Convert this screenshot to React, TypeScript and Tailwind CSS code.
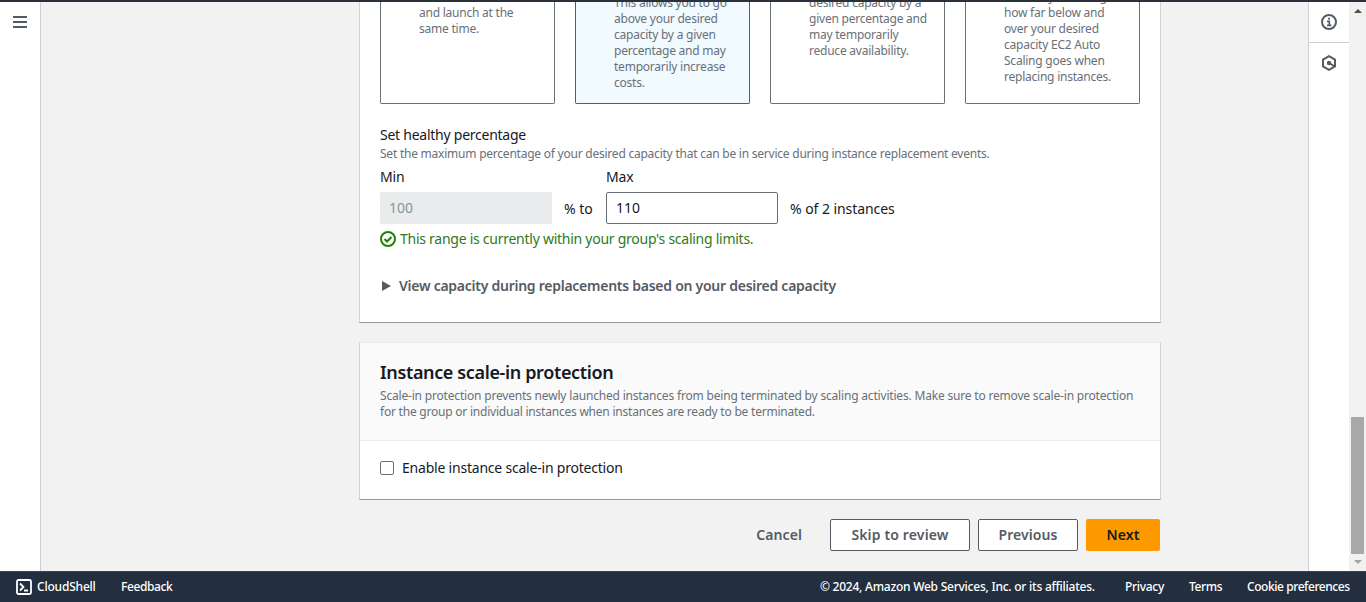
import React from "react";

function Strategy({ lines, selected, pad }: { lines: string[]; selected?: boolean; pad: string }) {
  return (
    <div
      className={`flex w-[175px] flex-col justify-end overflow-hidden rounded-b-[2px] border border-t-0 pl-[38px] text-[12px] leading-4 tracking-[-0.23px] text-[#687078] ${pad} ${
        selected ? "border-[#16748f] bg-[#f1faff]" : "border-[#687078] bg-white"
      }`}
    >
      {lines.map((l) => (
        <span key={l} className="block shrink-0 whitespace-nowrap">
          {l}
        </span>
      ))}
    </div>
  );
}

export default function App() {
  return (
    <div className="flex h-[602px] w-[1366px] flex-col overflow-hidden bg-[#f2f2f2] font-['Noto_Sans','Open_Sans',sans-serif] text-[14px] text-[#16191f]">
      <div className="h-[2px] shrink-0 bg-[#2b303b]" />
      <div className="flex h-[569px] shrink-0">
        <nav className="w-[41px] shrink-0 border-r border-[#ccd0d2] bg-white pl-[13px] pt-[14px]">
          <svg width="14" height="12" viewBox="0 0 14 12" fill="#545b64">
            <path d="M0 0h14v2H0zM0 5h14v2H0zM0 10h14v2H0z" />
          </svg>
        </nav>

        <main className="flex w-[1267px] shrink-0 flex-col overflow-hidden pl-[318px]">
          <section className="h-[321px] w-[802px] shrink-0 border-x border-b border-x-[#d0d4d5] border-b-[#949a9c] bg-white pl-5">
            <div className="flex h-[102px] w-[760px] justify-between">
              <Strategy pad="pb-[66px]" lines={["and launch at the", "same time."]} />
              <Strategy
                selected
                pad="pb-[12px]"
                lines={["This allows you to go", "above your desired", "capacity by a given", "percentage and may", "temporarily increase", "costs."]}
              />
              <Strategy pad="pb-[44px]" lines={["desired capacity by a", "given percentage and", "may temporarily", "reduce availability."]} />
              <Strategy
                pad="pb-[18px]"
                lines={["values by choosing", "how far below and", "over your desired", "capacity EC2 Auto", "Scaling goes when", "replacing instances."]}
              />
            </div>
            <h3 className="mt-[20px] leading-[22px] tracking-[-0.25px]">Set healthy percentage</h3>
            <p className="text-[12px] leading-4 tracking-[-0.23px] text-[#687078]">
              Set the maximum percentage of your desired capacity that can be in service during instance replacement events.
            </p>
            <div className="mt-[4px] flex leading-[22px] tracking-[-0.2px]">
              <span className="w-[226px]">Min</span>
              <span>Max</span>
            </div>
            <div className="mt-[4px] flex h-8 items-center">
              <div className="flex h-8 w-[172px] items-center rounded-[2px] bg-[#eaebed] pb-[2px] pl-[9px] text-[#879596]">100</div>
              <span className="w-[54px] pl-3">% to</span>
              <div className="flex h-8 w-[172px] items-center rounded-[2px] border border-[#687078] pb-[2px] pl-[9px]">110</div>
              <span className="pl-[12px] tracking-[-0.06px]">% of 2 instances</span>
            </div>
            <div className="mt-1 flex h-[22px] items-center gap-1 text-[#1d8102]">
              <svg width="16" height="16" viewBox="0 0 16 16" fill="none" stroke="#1d8102" strokeWidth="2">
                <circle cx="8" cy="8" r="7" />
                <path d="M4.5 8l2.5 2.5 4.5-4.5" />
              </svg>
              <span className="pb-[2px] tracking-[-0.26px] text-[#2f7a1c]">This range is currently within your group's scaling limits.</span>
            </div>
            <div className="mt-[25px] flex h-[22px] items-center font-semibold text-[#545b64]">
              <svg width="19" height="10" viewBox="0 0 19 10" fill="#545b64">
                <path d="M2 0l9 5-9 5z" />
              </svg>
              <span className="pb-[2px] tracking-[-0.26px]">View capacity during replacements based on your desired capacity</span>
            </div>
          </section>

          <section className="mt-[19px] h-[158px] w-[802px] shrink-0 border border-x-[#d0d4d5] border-b-[#949a9c] border-t-[#eaeded] bg-white">
            <header className="h-[98px] border-b border-[#eaeded] bg-[#fafafa] pl-5 pt-[18px]">
              <h2 className="text-[18px] font-semibold leading-[22px] tracking-[-0.36px]">Instance scale-in protection</h2>
              <p className="mt-[5px] text-[12px] leading-4 text-[#687078]">
                <span className="block whitespace-nowrap tracking-[-0.185px]">
                  Scale-in protection prevents newly launched instances from being terminated by scaling activities. Make sure to remove scale-in protection
                </span>
                <span className="block tracking-[-0.22px]">for the group or individual instances when instances are ready to be terminated.</span>
              </p>
            </header>
            <label className="flex h-[54px] items-center pl-5">
              <span className="mr-2 h-[14px] w-[14px] rounded-[2px] border border-[#687078]" />
              <span className="pb-[2px] tracking-[-0.21px]">Enable instance scale-in protection</span>
            </label>
          </section>

          <div className="mt-[19px] flex h-8 w-[802px] shrink-0 items-center justify-end pr-[1px] font-semibold tracking-[0.08px] text-[#545b64]">
            <span className="mr-[28px] pb-[2px]">Cancel</span>
            <button className="mr-2 h-8 w-[140px] rounded-[2px] border border-[#545b64] bg-white pb-[2px] tracking-[0.15px]">Skip to review</button>
            <button className="mr-2 h-8 w-[100px] rounded-[2px] border border-[#545b64] bg-white pb-[2px]">Previous</button>
            <button className="h-8 w-[74px] rounded-[2px] bg-[#ff9900] pb-[2px] text-[#16191f]">Next</button>
          </div>
        </main>

        <aside className="w-[41px] shrink-0 border-l border-[#ccd0d2] bg-white">
          <div className="flex h-[41px] items-center justify-center border-b border-[#ccd0d2]">
            <svg width="16" height="16" viewBox="0 0 16 16" fill="none" stroke="#545b64" strokeWidth="2">
              <circle cx="8" cy="8" r="7" />
              <path d="M6 7.4h2.3V11M6 11.4h4.4M7 4.7h2" strokeWidth="1.7" />
            </svg>
          </div>
          <div className="flex h-[40px] items-center justify-center">
            <svg width="16" height="16" viewBox="0 0 16 16" fill="none" stroke="#545b64" strokeWidth="2">
              <path d="M8 1.2l6 3.3v7L8 14.8l-6-3.3v-7z" />
              <path d="M8 8l5 3" />
              <circle cx="8" cy="8" r="1.2" fill="#545b64" />
            </svg>
          </div>
        </aside>

        <div className="flex w-[17px] shrink-0 flex-col items-center bg-[#f1f1f1]">
          <svg className="mt-[7px] shrink-0" width="8" height="4" viewBox="0 0 8 4" fill="#505050">
            <path d="M4 0l4 4H0z" />
          </svg>
          <div className="mt-[404px] h-[137px] w-[13px] shrink-0 bg-[#a8a8a8]" />
          <svg className="mt-[6px] shrink-0" width="8" height="4" viewBox="0 0 8 4" fill="#a3a3a3">
            <path d="M4 4L0 0h8z" />
          </svg>
        </div>
      </div>

      <footer className="flex h-[31px] shrink-0 items-center border-t border-[#3b4553] bg-[#232f3e] pl-4 pr-4 text-[12px] font-medium text-white">
        <svg className="mr-[5px]" width="16" height="16" viewBox="0 0 16 16" fill="none" stroke="#fff" strokeWidth="1.8">
          <rect x="1" y="1" width="14" height="14" rx="1.5" />
          <path d="M4 4.5L7.5 8 4 11.5M8 11.5h4" />
        </svg>
        <span className="w-[84px] whitespace-nowrap tracking-[-0.2px]">CloudShell</span>
        <span className="tracking-[-0.4px]">Feedback</span>
        <div className="ml-auto flex whitespace-nowrap">
          <span className="w-[305px] tracking-[-0.24px]">© 2024, Amazon Web Services, Inc. or its affiliates.</span>
          <span className="w-[64px] tracking-[-0.3px]">Privacy</span>
          <span className="w-[58px] tracking-[-0.4px]">Terms</span>
          <span className="w-[103px] tracking-[-0.43px]">Cookie preferences</span>
        </div>
      </footer>
    </div>
  );
}
